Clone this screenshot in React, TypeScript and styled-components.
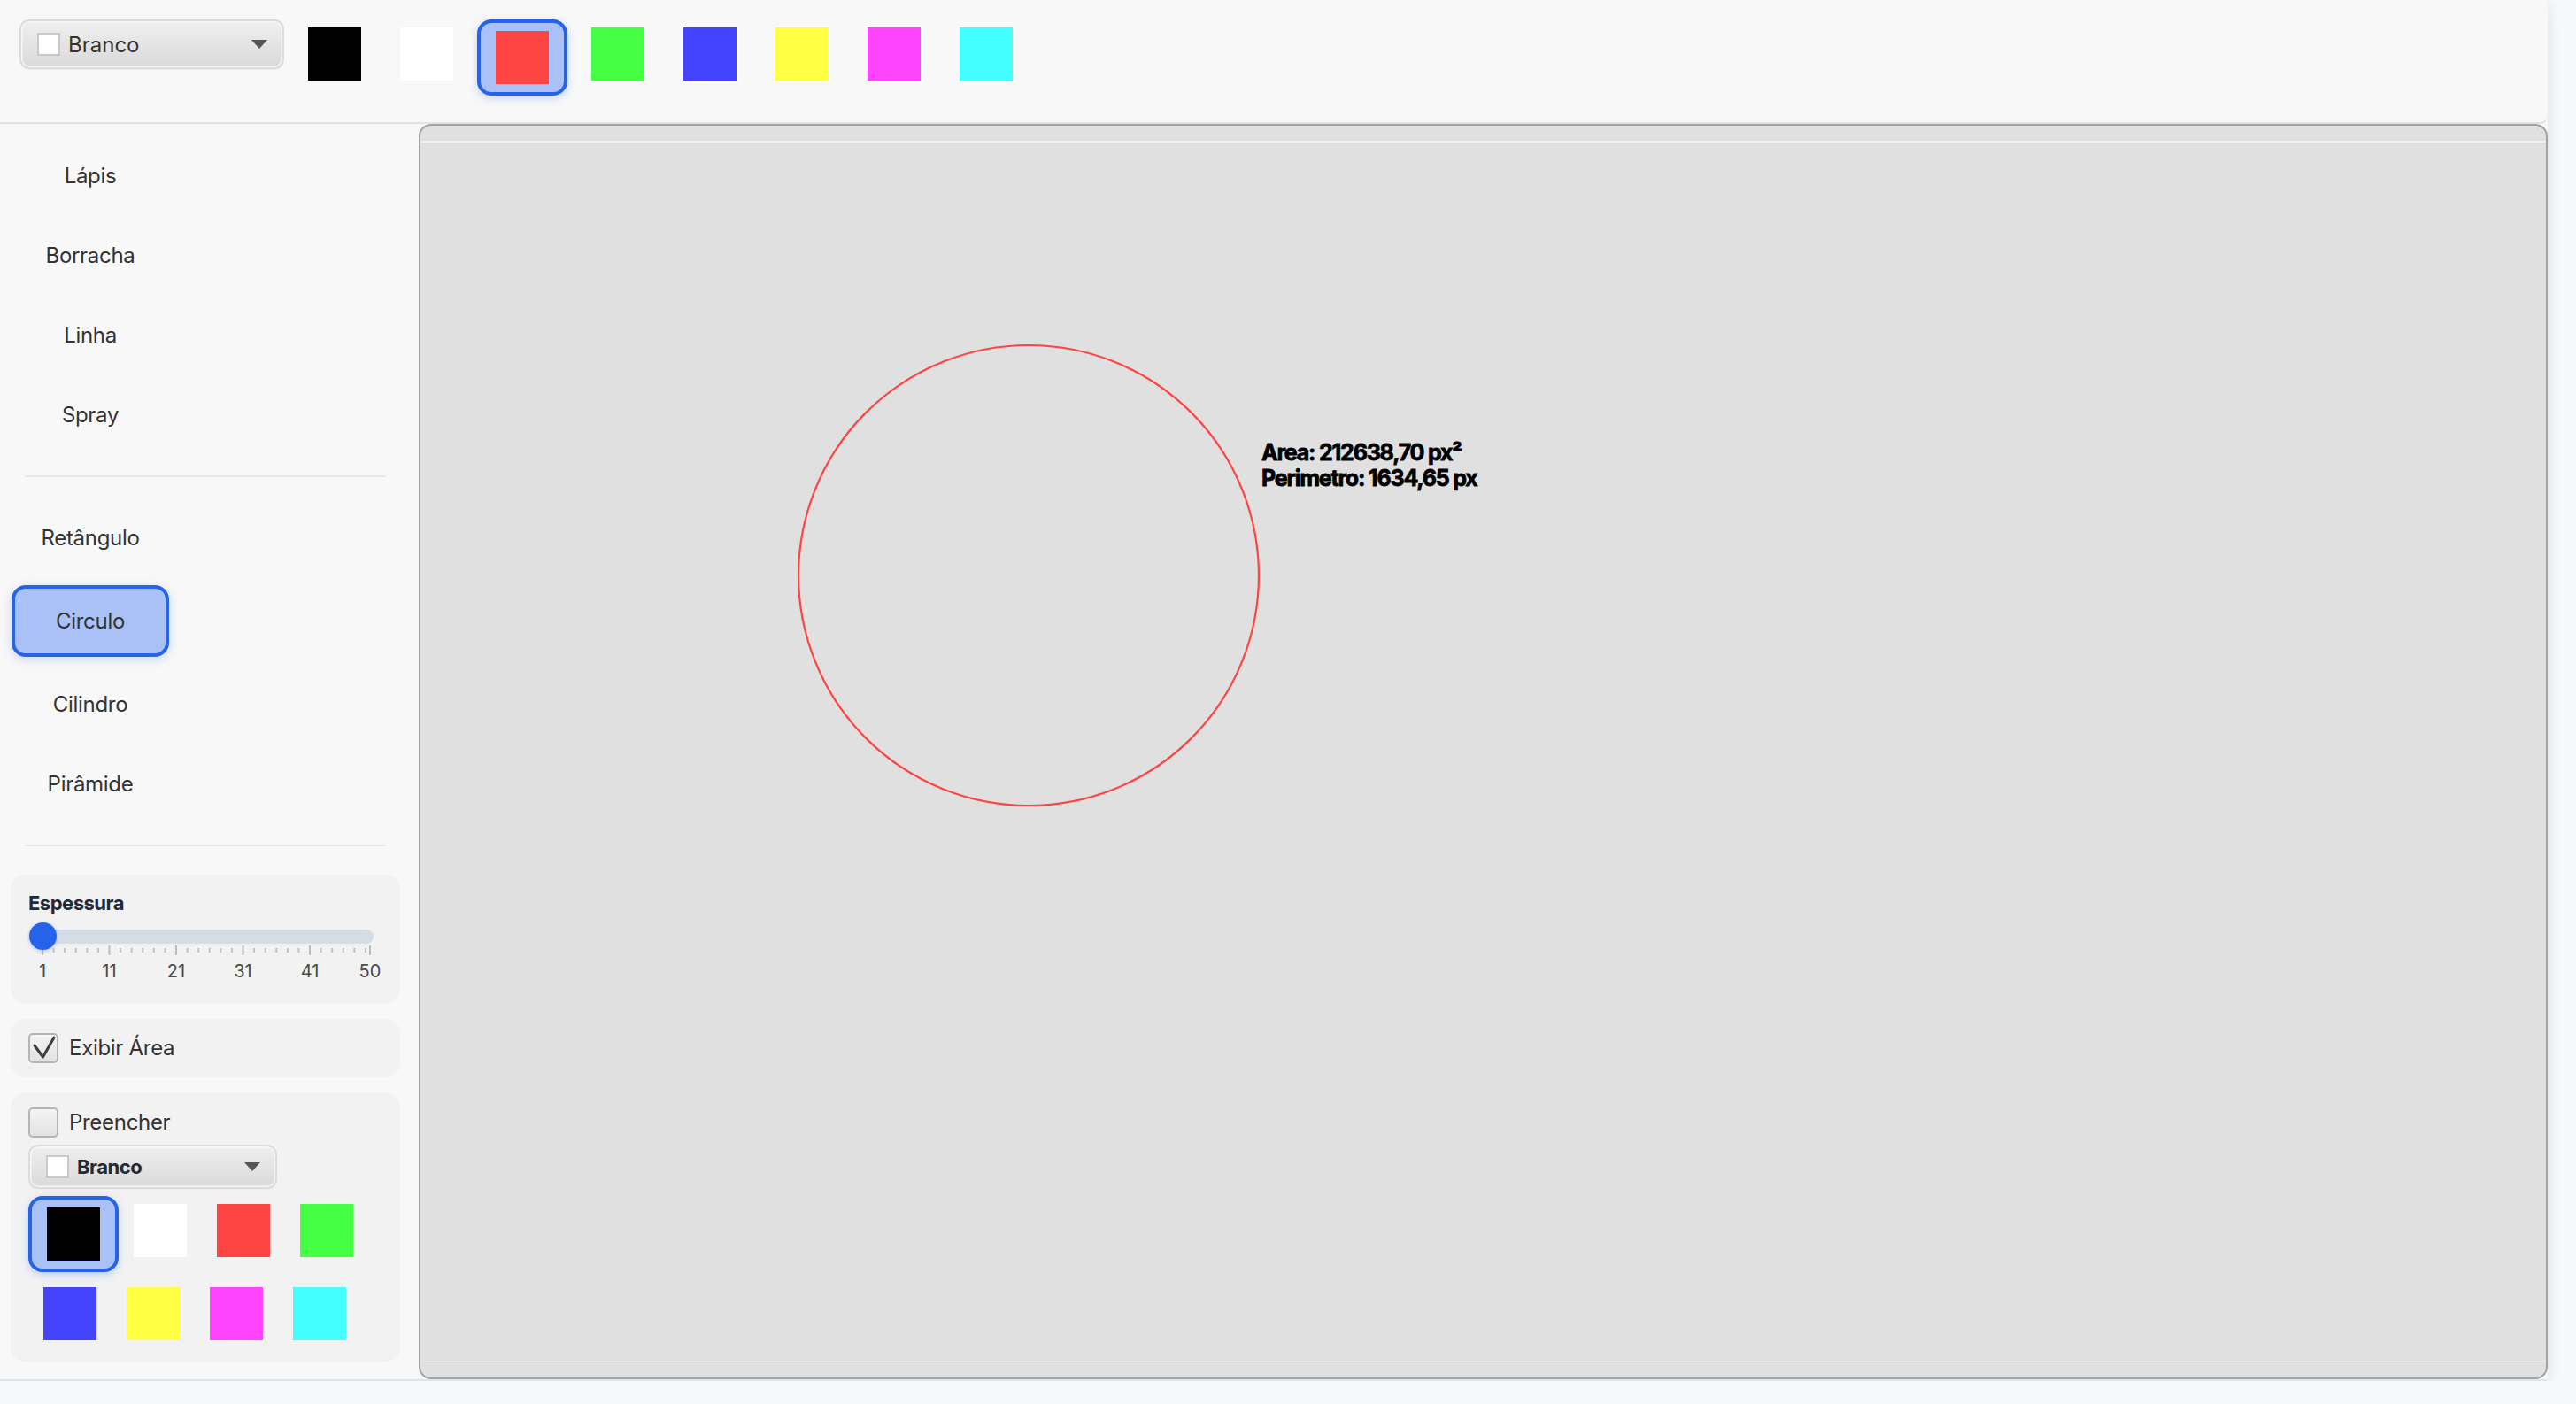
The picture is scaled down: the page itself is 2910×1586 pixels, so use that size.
import React from "react";
import styled, { createGlobalStyle, css } from "styled-components";

const GlobalStyle = createGlobalStyle`
  html, body { margin: 0; padding: 0; background: #f7f8fa; }
  body { font-family: Inter, "Noto Sans", sans-serif; -webkit-font-smoothing: antialiased; }
  * { box-sizing: border-box; }
`;

const PALETTE = ["#000000", "#ffffff", "#ff4444", "#44ff44", "#4444ff", "#ffff44", "#ff44ff", "#44ffff"];

const Window = styled.div`
  width: 2878px;
  height: 1560px;
  display: flex;
  flex-direction: column;
  background: #f8f8f9;
  border-bottom: 2px solid #dfe4eb;
  box-shadow: 3px 0 12px rgba(0, 0, 0, 0.06), 0 10px 22px -6px rgba(0, 0, 0, 0.07);
`;

const Toolbar = styled.div`
  flex-shrink: 0;
  height: 140px;
  display: flex;
  align-items: flex-start;
  gap: 10px;
  padding: 22px 0 0 22px;
  background: #f8f8f9;
  border-bottom: 2px solid #dfe4eb;
  border-bottom-right-radius: 8px;
`;

const Select = styled.div<{ $size: "lg" | "sm" }>`
  display: flex;
  align-items: center;
  gap: 9px;
  flex-shrink: 0;
  width: ${(p) => (p.$size === "lg" ? 299 : 281)}px;
  height: ${(p) => (p.$size === "lg" ? 56 : 50)}px;
  padding: 0 17px 0 18px;
  border-radius: 11px;
  border: 2px solid #dcdcdc;
  background: linear-gradient(#efefef, #d9d9d9);
  box-shadow: inset 0 0 0 1.5px #f7f7f7, 0 1px 0 #ececec;
`;

const Chip = styled.span`
  width: 26px;
  height: 26px;
  flex-shrink: 0;
  background: #ffffff;
  border: 2px solid #c9c9c9;
`;

const SelectText = styled.span<{ $size: "lg" | "sm" }>`
  flex: 1;
  white-space: nowrap;
  ${(p) =>
    p.$size === "lg"
      ? css`
          font-size: 24px;
          font-weight: 400;
          color: #333333;
        `
      : css`
          font-size: 22px;
          font-weight: 700;
          color: #1e293b;
          letter-spacing: -0.5px;
        `}
`;

const Arrow = styled.span`
  width: 0;
  height: 0;
  border-left: 9px solid transparent;
  border-right: 9px solid transparent;
  border-top: 10px solid #555555;
`;

const SwatchButton = styled.button<{ $selected?: boolean }>`
  display: flex;
  flex-shrink: 0;
  padding: 9px 17px;
  border: none;
  border-radius: 16px;
  background: transparent;
  cursor: pointer;
  ${(p) =>
    p.$selected &&
    css`
      border: 4px solid #2563eb;
      background: #a9c1f7;
      box-shadow: 0 3px 10px rgba(37, 99, 235, 0.25);
    `}
`;

const Swatch = styled.span<{ $color: string }>`
  display: block;
  width: 60px;
  height: 60px;
  background: ${(p) => p.$color};
`;

const Main = styled.div`
  flex: 1;
  display: flex;
  min-height: 0;
`;

const Sidebar = styled.div`
  width: 473px;
  flex-shrink: 0;
  display: flex;
  flex-direction: column;
  padding: 22px 21px 0 12px;
`;

const ToolList = styled.div`
  width: 180px;
  display: flex;
  flex-direction: column;
  align-items: center;
  gap: 17px;
`;

const ToolButton = styled.button<{ $active?: boolean }>`
  font-family: Inter, "Noto Sans", sans-serif;
  font-size: 24px;
  line-height: 31px;
  letter-spacing: -0.3px;
  color: #333333;
  white-space: nowrap;
  padding: 21px 46px;
  border: none;
  border-radius: 16px;
  background: transparent;
  cursor: pointer;
  ${(p) =>
    p.$active &&
    css`
      border: 4px solid #2563eb;
      background: #a9c1f7;
      box-shadow: 0 3px 12px rgba(37, 99, 235, 0.22);
    `}
`;

const Separator = styled.div`
  height: 2px;
  margin: 32px 16px;
  background: #e5eaf0;
`;

const PanelStack = styled.div`
  display: flex;
  flex-direction: column;
  gap: 18px;
`;

const Panel = styled.div<{ $pad?: string }>`
  display: flex;
  flex-direction: column;
  gap: 8px;
  padding: ${(p) => p.$pad || "16px 20px"};
  border-radius: 16px;
  background: #f2f2f3;
`;

const PanelTitle = styled.div`
  font-size: 22px;
  line-height: 26px;
  font-weight: 700;
  letter-spacing: -0.5px;
  color: #1e293b;
`;

const SliderBox = styled.div`
  position: relative;
  height: 26px;
  margin-top: 1px;
  padding: 8px 0 0 1px;
`;

const Track = styled.div`
  width: 389px;
  height: 16px;
  border-radius: 8px;
  background: #d5dce5;
`;

const Thumb = styled.div`
  position: absolute;
  top: 0;
  left: 0;
  width: 31px;
  height: 31px;
  border-radius: 50%;
  background: #2563eb;
  box-shadow: 0 1px 4px rgba(37, 99, 235, 0.35);
`;

const Axis = styled.svg`
  display: block;
  margin-top: -8px;
`;

const CheckRow = styled.label`
  display: flex;
  align-items: center;
  gap: 12px;
  font-size: 24px;
  line-height: 34px;
  color: #333333;
  letter-spacing: -0.3px;
`;

const CheckBox = styled.span`
  width: 34px;
  height: 34px;
  flex-shrink: 0;
  display: flex;
  align-items: center;
  justify-content: center;
  border: 2px solid #b5b5b5;
  border-radius: 5px;
  background: linear-gradient(#f4f4f4, #e2e2e2);
`;

const SwatchGrid = styled.div`
  display: flex;
  flex-direction: column;
  gap: 8px;
`;

const SwatchRow = styled.div`
  display: flex;
  align-items: flex-start;
`;

const CanvasFrame = styled.div`
  flex: 1;
  display: flex;
  flex-direction: column;
  border: 2px solid #a3a3a3;
  border-radius: 14px;
  background: #e0e0e0;
  overflow: hidden;
`;

const Viewport = styled.div`
  flex: 1;
  margin: 17px 0 18px;
  border-top: 2px solid #f0f0f0;
  border-bottom: 1px solid #e9e9e9;
`;

const Drawing = styled.svg`
  display: block;
  width: 100%;
  height: 100%;
`;

const TOOLS_A = ["Lápis", "Borracha", "Linha", "Spray"];
const TOOLS_B = ["Retângulo", "Circulo", "Cilindro", "Pirâmide"];

const MIN = 1;
const MAX = 50;
const AXIS_START = 16;
const AXIS_LEN = 370;
const vx = (v: number) => AXIS_START + ((v - MIN) / (MAX - MIN)) * AXIS_LEN;

function TickAxis() {
  const majors = [1, 11, 21, 31, 41, 50];
  const minors: number[] = [];
  for (let m = 1; m < 50; m += 10) {
    for (let k = 1; k <= 5; k++) {
      const v = m + (k * 10) / 6;
      if (v < 50) minors.push(v);
    }
  }
  return (
    <Axis width={400} height={40} viewBox="0 0 400 40">
      {minors.map((v, i) => (
        <line key={"m" + i} x1={vx(v)} x2={vx(v)} y1={3} y2={8} stroke="#c2c2c2" strokeWidth={2} />
      ))}
      {majors.map((v) => (
        <line key={"M" + v} x1={vx(v)} x2={vx(v)} y1={0} y2={11} stroke="#bcbcbc" strokeWidth={2} />
      ))}
      {majors.map((v) => (
        <text
          key={"t" + v}
          x={vx(v)}
          y={36}
          textAnchor="middle"
          fontFamily="Inter, 'Noto Sans', sans-serif"
          fontSize={20}
          fill="#4a4a4a"
        >
          {v}
        </text>
      ))}
    </Axis>
  );
}

function Check() {
  return (
    <svg width="30" height="30" viewBox="0 0 30 30">
      <path d="M5 12 L14.5 25 L27 3" fill="none" stroke="#3c3c3c" strokeWidth={3} strokeLinecap="round" strokeLinejoin="round" />
    </svg>
  );
}

export default function App() {
  return (
    <>
      <GlobalStyle />
      <Window>
        <Toolbar>
          <Select $size="lg">
            <Chip />
            <SelectText $size="lg">Branco</SelectText>
            <Arrow />
          </Select>
          {PALETTE.map((c, i) => (
            <SwatchButton key={c} $selected={i === 2}>
              <Swatch $color={c} />
            </SwatchButton>
          ))}
        </Toolbar>
        <Main>
          <Sidebar>
            <ToolList>
              {TOOLS_A.map((t) => (
                <ToolButton key={t}>{t}</ToolButton>
              ))}
            </ToolList>
            <Separator />
            <ToolList>
              {TOOLS_B.map((t) => (
                <ToolButton key={t} $active={t === "Circulo"}>
                  {t}
                </ToolButton>
              ))}
            </ToolList>
            <Separator />
            <PanelStack>
              <Panel $pad="19px 20px 25px">
                <PanelTitle>Espessura</PanelTitle>
                <SliderBox>
                  <Track />
                  <Thumb style={{ left: vx(1) - 15.5 }} />
                </SliderBox>
                <TickAxis />
              </Panel>
              <Panel>
                <CheckRow>
                  <CheckBox>
                    <Check />
                  </CheckBox>
                  Exibir Área
                </CheckRow>
              </Panel>
              <Panel $pad="16px 20px 15px">
                <CheckRow>
                  <CheckBox />
                  Preencher
                </CheckRow>
                <Select $size="sm">
                  <Chip />
                  <SelectText $size="sm">Branco</SelectText>
                  <Arrow />
                </Select>
                <SwatchGrid>
                  <SwatchRow>
                    {PALETTE.slice(0, 4).map((c, i) => (
                      <SwatchButton key={c} $selected={i === 0}>
                        <Swatch $color={c} />
                      </SwatchButton>
                    ))}
                  </SwatchRow>
                  <SwatchRow>
                    {PALETTE.slice(4).map((c) => (
                      <SwatchButton key={c}>
                        <Swatch $color={c} />
                      </SwatchButton>
                    ))}
                  </SwatchRow>
                </SwatchGrid>
              </Panel>
            </PanelStack>
          </Sidebar>
          <CanvasFrame>
            <Viewport>
              <Drawing>
                <circle cx={687} cy={489} r={260} fill="none" stroke="#ff4444" strokeWidth={2.2} />
                <g
                  fontFamily="Inter, 'Noto Sans', sans-serif"
                  fontWeight={700}
                  fontSize={25}
                  letterSpacing={-1.2}
                  fill="#000000"
                  stroke="#000000"
                  strokeWidth={0.8}
                >
                  <text x={950} y={359}>Area: 212638,70 px²</text>
                  <text x={950} y={388}>Perimetro: 1634,65 px</text>
                </g>
              </Drawing>
            </Viewport>
          </CanvasFrame>
        </Main>
      </Window>
    </>
  );
}
